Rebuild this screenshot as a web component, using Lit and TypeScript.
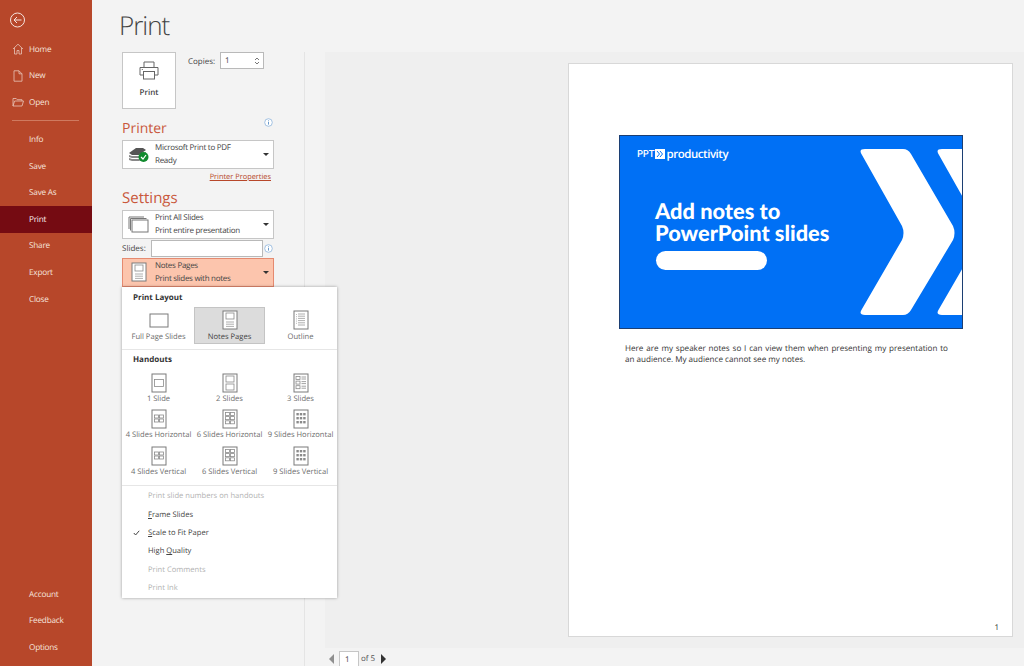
import { LitElement, html, css, svg } from "lit";
import { customElement } from "lit/decorators.js";

const pageBase = svg`<rect x="1" y="1" width="14" height="18" fill="#fff" stroke="#7a7a7a" stroke-width="1"/>`;
const tile = (x: number, y: number, w: number, h: number) =>
  svg`<rect x=${x} y=${y} width=${w} height=${h} fill="#fff" stroke="#8a8a8a" stroke-width=".8"/>`;
const gridTiles = (cols: number, rows: number, w: number, h: number, gx: number, gy: number, sy: number, dark = false) => {
  const out = [];
  const tw = cols * w + (cols - 1) * gx;
  const sx = 8 - tw / 2;
  for (let r = 0; r < rows; r++)
    for (let c = 0; c < cols; c++)
      out.push(dark
        ? svg`<rect x=${sx + c * (w + gx)} y=${sy + r * (h + gy)} width=${w} height=${h} fill="#8a8a8a"/>`
        : tile(sx + c * (w + gx), sy + r * (h + gy), w, h));
  return out;
};
const layoutIcon = (inner: unknown) =>
  html`<svg class="ico" viewBox="0 0 16 20" width="16" height="20">${pageBase}${inner}</svg>`;
const lines = (y0: number, n: number, x1 = 4, x2 = 12, step = 2.2) => {
  const o = [];
  for (let i = 0; i < n; i++) o.push(svg`<path d="M${x1} ${y0 + i * step}H${x2}" stroke="#9a9a9a" stroke-width=".8"/>`);
  return o;
};

const notesIcon = svg`${tile(4, 3, 8, 6)}${lines(12, 3)}`;
const outlineIcon = svg`${lines(4, 6, 5, 12)}<path d="M3.5 4v11" stroke="#aaa" stroke-width=".8" stroke-dasharray="1 1.2"/>`;
const threeIcon = svg`${[0, 1, 2].map((i) => svg`${tile(3, 3.5 + i * 4.6, 4, 3)}<path d="M8.5 ${4 + i * 4.6}h4.5M8.5 ${6 + i * 4.6}h4.5" stroke="#8a8a8a" stroke-width=".8"/>`)}`;

const handouts = [
  { t: "1 Slide", i: tile(3.5, 6.5, 9, 7) },
  { t: "2 Slides", i: svg`${tile(4, 3, 8, 6)}${tile(4, 11, 8, 6)}` },
  { t: "3 Slides", i: threeIcon },
  { t: "4 Slides Horizontal", i: gridTiles(2, 2, 4, 3, 1, 1, 6) },
  { t: "6 Slides Horizontal", i: gridTiles(2, 3, 4, 3, 1, 1.2, 3.4) },
  { t: "9 Slides Horizontal", i: gridTiles(3, 3, 2.4, 2.4, 1, 1.6, 4, true) },
  { t: "4 Slides Vertical", i: gridTiles(2, 2, 4, 3, 1, 1, 6) },
  { t: "6 Slides Vertical", i: gridTiles(2, 3, 4, 3, 1, 1.2, 3.4) },
  { t: "9 Slides Vertical", i: gridTiles(3, 3, 2.4, 2.4, 1, 1.6, 4, true) },
];

const iconHome = html`<svg viewBox="0 0 12 12" width="12" height="12" fill="none" stroke="#e8c5b9" stroke-width=".8"><path d="M1 6 6 1.2 11 6M2.5 5v6h2.5V7.5h2V11h2.5V5"/></svg>`;
const iconNew = html`<svg viewBox="0 0 12 12" width="12" height="12" fill="none" stroke="#e8c5b9" stroke-width=".8"><path d="M2 .8h5l3 3v7.4H2zM7 .8v3h3"/></svg>`;
const iconOpen = html`<svg viewBox="0 0 12 12" width="12" height="12" fill="none" stroke="#e8c5b9" stroke-width=".8"><path d="M1 10V2.5h3.2l1 1.2H10V5M1 10l1.6-5H11.5L10 10z"/></svg>`;

type NavItem = { t: string; icon?: unknown; active?: boolean };
const navTop: NavItem[] = [
  { t: "Home", icon: iconHome },
  { t: "New", icon: iconNew },
  { t: "Open", icon: iconOpen },
];
const navMid: NavItem[] = [
  { t: "Info" }, { t: "Save" }, { t: "Save As" }, { t: "Print", active: true },
  { t: "Share" }, { t: "Export" }, { t: "Close" },
];
const navBottom: NavItem[] = [{ t: "Account" }, { t: "Feedback" }, { t: "Options" }];

const infoIcon = html`<svg class="info" viewBox="0 0 9 9" width="9" height="9"><circle cx="4.5" cy="4.5" r="3.8" fill="#fff" stroke="#8db4dc" stroke-width=".8"/><path d="M4.5 4v2.6M4.5 2.4v.9" stroke="#5a8fc4" stroke-width=".9"/></svg>`;

const caret = html`<span class="caret"></span>`;
const chevron = "M246 14H284Q289 14 292 19L334 91Q337 98 334 105L292 175Q289 180 284 180H246Q239 180 243 174L283 105Q286 98 283 91L243 20Q239 14 246 14Z";

@customElement("app-root")
export class AppRoot extends LitElement {
  static styles = css`
    :host { display: block; width: 1024px; height: 666px; overflow: hidden; position: relative;
      font-family: "Open Sans", "Noto Sans", sans-serif; font-size: 8px; color: #444; background: #f3f3f3;
      text-rendering: geometricPrecision; }
    .app { display: grid; grid-template-columns: 92px 1fr; height: 666px; }
    .side { background: #b7472a; color: #f6e4de; display: flex; flex-direction: column; padding-top: 7px; }
    .back { height: 26px; padding-left: 10px; display: flex; align-items: center; margin-bottom: 3px; }
    .nav { height: 26.6px; display: flex; align-items: center; padding-left: 29px; position: relative; font-size: 8.2px; letter-spacing: -.2px; flex: none; }
    .nav svg { position: absolute; left: 12px; top: 7px; }
    .nav.active { background: #750b12; color: #fbeeee; }
    .sep { height: 1px; background: #cf7a60; margin: 4.5px 13px 5px 12px; flex: none; }
    .grow { flex: 1; }
    .bottom { padding-bottom: 5.5px; }
    .main { display: flex; flex-direction: column; min-width: 0; }
    h1 { margin: 0; height: 52px; padding-left: 27px; font-weight: 300; font-size: 26px; letter-spacing: -1px; line-height: 50px; color: #444; flex: none; }
    .body { flex: 1; display: flex; min-height: 0; }
    .settings { width: 213px; border-right: 1px solid #e4e4e4; padding-left: 30px; box-sizing: border-box; flex: none; position: relative; }
    .top { display: flex; height: 57px; }
    .printbtn { width: 54px; height: 57px; box-sizing: border-box; background: #fff; border: 1px solid #c6c6c6; display: flex; flex-direction: column; align-items: center; padding-top: 7px; font-weight: 600; font-size: 8px; gap: 5px; }
    .copies { display: flex; align-items: flex-start; margin-left: 12px; gap: 0; }
    .copies label { line-height: 19px; width: 32px; }
    .num { width: 44px; height: 17px; box-sizing: border-box; border: 1px solid #b9b9b9; background: #fff; display: flex; justify-content: space-between; align-items: center; padding: 0 3px 0 4px; }
    .spin { display: flex; flex-direction: column; gap: 2px; }
    .spin svg { display: block; }
    .sect { color: #c9583c; font-size: 14px; line-height: 18px; position: relative; height: 18px; margin-top: 11px; width: 152px; display: flex; justify-content: space-between; }
    .sect .info { margin-top: -2px; position: relative; left: -1px; }
    .dd { width: 152px; height: 29px; box-sizing: border-box; border: 1px solid #c6c6c6; background: #fff; display: flex; align-items: center; position: relative; }
    .dd .thumb { width: 32px; display: flex; justify-content: center; flex: none; }
    .dd .txt { flex: 1; line-height: 13.4px; font-size: 8px; letter-spacing: -.28px; color: #444; white-space: nowrap; }
    .dd.sel { background: #fcc5ad; border-color: #e58a70; }
    .dd.first { margin-top: 1.5px; }
    .caret { width: 0; height: 0; border: 3px solid transparent; border-top: 3.5px solid #333; border-bottom: 0; margin-right: 4px; }
    .link { width: 149px; text-align: right; color: #b7472a; text-decoration: underline; line-height: 11px; margin-top: 3px; height: 11px; font-size: 7.4px; }
    .sect.s2 { margin-top: 5px; font-size: 15px; margin-bottom: 2px; height: 20px; line-height: 20px; }
    .slides { display: flex; width: 152px; align-items: center; height: 18px; margin: 1px 0 0; justify-content: space-between; }
    .slides .field { width: 112px; height: 17px; box-sizing: border-box; border: 1px solid #b9b9b9; background: #fff; margin-left: 4px; }
    .popup { position: absolute; left: 30px; top: 235px; width: 215px; height: 311px; box-sizing: border-box; background: #fff; box-shadow: 0 0 3px rgba(0,0,0,.35); z-index: 3; padding: 1px 0 0; }
    .ph { font-weight: 700; color: #333; font-size: 8px; padding-left: 11px; height: 19px; line-height: 19px; }
    .ph.h2 { height: 22px; line-height: 20px; }
    .grid { display: grid; grid-template-columns: repeat(3, 71px); padding-left: 1px; }
    .cell { height: 36.5px; display: flex; flex-direction: column; align-items: center; justify-content: flex-start; color: #6d6d6d; font-size: 7.6px; white-space: nowrap; padding-top: 1px; box-sizing: border-box; }
    .cell span { line-height: 11px; margin-top: 1px; }
    .grid.lay .cell { padding-top: 3px; }
    .grid.lay .cell span { margin-top: 2px; }
    .cell.on { background: #dcdcdc; border: 1px solid #c4c4c4; color: #444; }
    .grid.lay .cell.on { padding-top: 2px; }
    .ico { display: block; flex: none; }
    .hr { height: 1px; background: #e6e6e6; }
    .hr.a { margin-top: 5px; }
    .hr.b { margin-top: 4px; margin-bottom: 1px; }
    .menu { height: 18.4px; display: flex; align-items: center; padding-left: 26px; position: relative; color: #444; font-size: 7.6px; }
    .menu.off { color: #b2b2b2; }
    .menu u { text-decoration: underline; }
    .menu svg { position: absolute; left: 11px; top: 6px; }
    .previewcol { flex: 1; display: flex; flex-direction: column; min-width: 0; padding-left: 20px; }
    .preview { height: 596px; flex: none; background: #efefef; display: flex; justify-content: flex-end; padding: 11px 11px 11px 0; box-sizing: border-box; }
    .page { width: 445px; height: 574px; box-sizing: border-box; background: #fff; border: 1px solid #d8d8d8; padding: 71px 21px 3px 50px; display: flex; flex-direction: column; }
    .slide { width: 344px; height: 194px; box-sizing: border-box; flex: none; background: #0070f5; border: 1px solid #1c3f73; position: relative; overflow: hidden; color: #fff; padding: 10px 0 0 17px; }
    .chev { position: absolute; left: -1px; top: -1px; }
    .fg { position: relative; }
    .logo { display: flex; align-items: center; height: 16px; font-size: 11.5px; letter-spacing: -.45px; font-weight: 600; font-family: "Open Sans", sans-serif; gap: 1px; }
    .logo b { font-weight: 600; font-size: 9.6px; letter-spacing: 0; font-family: Lato, sans-serif; }
    .head { font-family: Lato, sans-serif; font-weight: 900; font-size: 21.8px; line-height: 22px; margin: 37.5px 0 0 18px; white-space: nowrap; }
    .pill { width: 111px; height: 19px; background: #fff; border-radius: 10px; margin: 7px 0 0 19px; }
    .notes { margin: 14px 0 0 6px; width: 323px; font-size: 8.1px; line-height: 11.4px; color: #333; font-family: "Open Sans", sans-serif; }
    .notes .l1 { text-align: justify; text-align-last: justify; }
    .pnum { margin-top: auto; align-self: flex-end; font-size: 8px; color: #333; line-height: 11px; margin-right: -8px; }
    .pager { display: flex; align-items: center; height: 18px; padding: 3px 0 0 4px; box-sizing: border-box; position: relative; color: #555; }
    .pager .tl { width: 0; height: 0; border: 5px solid transparent; border-right: 5px solid #8f8f8f; border-left: 0; }
    .pager .tr { width: 0; height: 0; border: 5px solid transparent; border-left: 5px solid #333; border-right: 0; margin-left: 6px; }
    .pager .pi { width: 20px; height: 18px; box-sizing: border-box; border: 1px solid #c6c6c6; background: #fff; margin: 0 2px -3px 5px; padding: 2px 0 0 5px; color: #444; }
  `;

  renderNav(n: NavItem) {
    return html`<div class="nav ${n.active ? "active" : ""}">${n.icon ?? ""}${n.t}</div>`;
  }

  render() {
    return html`<div class="app">
      <aside class="side">
        <div class="back">
          <svg viewBox="0 0 16 16" width="16" height="16" fill="none" stroke="#f6e4de" stroke-width="1"><circle cx="7.5" cy="8" r="7"/><path d="M11.5 8H4M7 5 4 8l3 3"/></svg>
        </div>
        ${navTop.map((n) => this.renderNav(n))}
        <div class="sep"></div>
        ${navMid.map((n) => this.renderNav(n))}
        <div class="grow"></div>
        <div class="bottom">${navBottom.map((n) => this.renderNav(n))}</div>
      </aside>
      <main class="main">
        <h1>Print</h1>
        <div class="body">
          <section class="settings">
            <div class="top">
              <div class="printbtn">
                <svg viewBox="0 0 22 22" width="22" height="22" fill="none" stroke="#666" stroke-width="1"><path d="M6 7V2h10v5"/><path d="M5.500 15H2V7.500h18V15h-3.500"/><rect x="5.500" y="11.500" width="11" height="7.500" fill="#fff"/><path d="M3.800 9.500h1" /></svg>
                <span>Print</span>
              </div>
              <div class="copies">
                <label>Copies:</label>
                <div class="num"><span>1</span><span class="spin">
                  <svg viewBox="0 0 6 3" width="6" height="3" fill="none" stroke="#555" stroke-width=".8"><path d="M1 3 3 1l2 2"/></svg>
                  <svg viewBox="0 0 6 3" width="6" height="3" fill="none" stroke="#555" stroke-width=".8"><path d="M1 0l2 2 2-2"/></svg>
                </span></div>
              </div>
            </div>
            <div class="sect"><span>Printer</span>${infoIcon}</div>
            <div class="dd first">
              <div class="thumb"><svg viewBox="0 0 24 20" width="24" height="20"><path d="M2 9 9 4h7l3 2-7 5H5z" fill="#555"/><path d="M2 11l3 1h7l7-4v2l-7 4H5l-3-1zM2 14l3 1h7l6-3v2l-6 3H5l-3-1z" fill="#888"/><circle cx="16.500" cy="13" r="5" fill="#118a2e"/><path d="M14 13l2 2 3-4" fill="none" stroke="#fff" stroke-width="1.200"/></svg></div>
              <div class="txt">Microsoft Print to PDF<br>Ready</div>${caret}
            </div>
            <div class="link">Printer Properties</div>
            <div class="sect s2"><span>Settings</span></div>
            <div class="dd">
              <div class="thumb"><svg viewBox="0 0 22 18" width="22" height="18" fill="none" stroke="#777"><path d="M1 14V2h15" /><path d="M2.500 15.500V3.500h16" fill="none"/><rect x="4" y="5" width="16" height="12" fill="#fff"/></svg></div>
              <div class="txt">Print All Slides<br>Print entire presentation</div>${caret}
            </div>
            <div class="slides"><span>Slides:</span><div class="field"></div>${infoIcon}<span></span></div>
            <div class="dd sel">
              <div class="thumb">${layoutIcon(notesIcon)}</div>
              <div class="txt">Notes Pages<br>Print slides with notes</div>${caret}
            </div>
            <div class="popup">
              <div class="ph">Print Layout</div>
              <div class="grid lay">
                <div class="cell"><svg class="ico" viewBox="0 0 20 20" width="20" height="20"><rect x="1" y="4" width="18" height="13" fill="#fff" stroke="#7a7a7a"/></svg><span>Full Page Slides</span></div>
                <div class="cell on">${layoutIcon(notesIcon)}<span>Notes Pages</span></div>
                <div class="cell">${layoutIcon(outlineIcon)}<span>Outline</span></div>
              </div>
              <div class="hr a"></div>
              <div class="ph h2">Handouts</div>
              <div class="grid">
                ${handouts.map((h) => html`<div class="cell">${layoutIcon(h.i)}<span>${h.t}</span></div>`)}
              </div>
              <div class="hr b"></div>
              <div class="menu off">Print slide numbers on handouts</div>
              <div class="menu"><span><u>F</u>rame Slides</span></div>
              <div class="menu"><svg viewBox="0 0 7 6" width="7" height="6" fill="none" stroke="#444" stroke-width="1"><path d="M.8 3 2.600 5 6.200.8"/></svg><span><u>S</u>cale to Fit Paper</span></div>
              <div class="menu"><span>High <u>Q</u>uality</span></div>
              <div class="menu off">Print Comments</div>
              <div class="menu off">Print Ink</div>
            </div>
          </section>
          <section class="previewcol">
            <div class="preview">
              <div class="page">
                <div class="slide">
                  <svg class="chev" viewBox="0 0 344 194" width="344" height="194"><path fill="#fff" d=${chevron}/><path fill="#fff" transform="translate(77 0)" d=${chevron}/></svg>
                  <div class="logo fg"><b>PPT</b><svg viewBox="0 0 10 10" width="10" height="10"><rect width="10" height="10" fill="#fff"/><path d="M2 2l2.500 3L2 8M5 2l2.500 3L5 8" fill="none" stroke="#0070f5" stroke-width="1"/></svg><span>productivity</span></div>
                  <div class="head fg">Add notes to<br>PowerPoint slides</div>
                  <div class="pill fg"></div>
                </div>
                <div class="notes"><div class="l1">Here are my speaker notes so I can view them when presenting my presentation to</div><div>an audience. My audience cannot see my notes.</div></div>
                <div class="pnum">1</div>
              </div>
            </div>
            <div class="pager"><span class="tl"></span><span class="pi">1</span><span>of 5</span><span class="tr"></span></div>
          </section>
        </div>
      </main>
    </div>`;
  }
}
